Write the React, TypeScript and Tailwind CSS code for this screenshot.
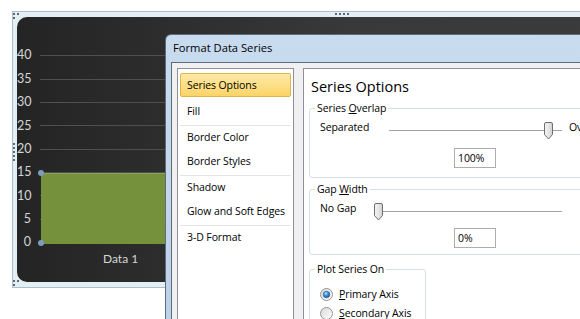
import React from "react";

const ticks = [40, 35, 30, 25, 20, 15, 10, 5, 0];

type NavEntry = { label: string; sep?: boolean };
const navItems: NavEntry[] = [
  { label: "Fill", sep: true },
  { label: "Border Color" },
  { label: "Border Styles", sep: true },
  { label: "Shadow" },
  { label: "Glow and Soft Edges", sep: true },
  { label: "3-D Format" },
];

function Thumb() {
  return (
    <svg width="11" height="18" viewBox="0 0 11 18">
      <defs>
        <linearGradient id="thumbFill" x1="0" y1="0" x2="1" y2="0">
          <stop offset="0" stopColor="#f4f4f4" />
          <stop offset="0.5" stopColor="#e6e6e6" />
          <stop offset="1" stopColor="#cfcfcf" />
        </linearGradient>
      </defs>
      <path
        d="M1.5 2 Q1.5 0.5 3 0.5 H8 Q9.5 0.5 9.5 2 V12.5 L5.5 17 L1.5 12.5 Z"
        fill="url(#thumbFill)"
        stroke="#6f6f6f"
        strokeWidth="1"
      />
    </svg>
  );
}

function Radio({ checked }: { checked?: boolean }) {
  return (
    <svg width="13" height="13" viewBox="0 0 13 13">
      <defs>
        <linearGradient id="radioBg" x1="0" y1="0" x2="1" y2="1">
          <stop offset="0" stopColor="#d9d9d9" />
          <stop offset="1" stopColor="#ffffff" />
        </linearGradient>
        <radialGradient id="radioDot" cx="0.4" cy="0.35" r="0.7">
          <stop offset="0" stopColor="#b6e2ff" />
          <stop offset="0.5" stopColor="#3d8ad6" />
          <stop offset="1" stopColor="#1a4f8c" />
        </radialGradient>
      </defs>
      <circle cx="6.5" cy="6.5" r="6" fill="url(#radioBg)" stroke="#929292" />
      {checked && <circle cx="6.5" cy="6.5" r="3.3" fill="url(#radioDot)" stroke="#2a5a8c" strokeWidth="0.6" />}
    </svg>
  );
}

function Slider({ width, thumbAt }: { width: number; thumbAt: number }) {
  return (
    <div className="relative h-[20px] shrink-0" style={{ width }}>
      <div className="absolute left-0 right-0 top-[12px] h-[2px] border-t border-[#a2a2a2] bg-white" />
      <div className="absolute top-[4px]" style={{ left: thumbAt }}>
        <Thumb />
      </div>
    </div>
  );
}

export default function App() {
  return (
    <div className="w-[580px] h-[319px] relative overflow-hidden bg-white font-['Open_Sans',sans-serif]">
      {/* CHART */}
      <div className="pt-[11px] pl-[12px]">
        <div className="relative w-[620px] h-[277px] border border-[#a9bfcb] bg-[#e4eff4] pt-[5px] pl-[4px] pb-[5px]">
          {/* handles */}
          <div className="absolute left-[322px] top-[1px] flex gap-[2px]">
            {[0, 1, 2, 3].map((i) => (
              <div key={i} className="w-[2px] h-[2px] bg-[#5b6a78]" />
            ))}
          </div>
          <div className="absolute left-[0px] top-[131px] flex flex-col gap-[2px]">
            {[0, 1, 2, 3, 4].map((i) => (
              <div key={i} className="w-[2px] h-[2px] bg-[#5b6a78]" />
            ))}
          </div>
          <div className="absolute left-[0px] top-[1px] grid grid-cols-2 gap-[2px]">
            <div className="w-[2px] h-[2px] bg-[#5b6a78]" />
            <div className="w-[2px] h-[2px] bg-[#5b6a78]" />
            <div className="w-[2px] h-[2px] bg-[#5b6a78]" />
          </div>
          <div className="absolute left-[0px] bottom-[1px] grid grid-cols-2 gap-[2px]">
            <div className="w-[2px] h-[2px] bg-[#5b6a78]" />
            <div className="w-[2px] h-[2px] bg-[#5b6a78]" />
            <div className="w-[2px] h-[2px] bg-[#5b6a78]" />
          </div>

          {/* dark plot */}
          <div className="h-full rounded-l-[10px] bg-linear-to-r from-[#242424] via-[#393939] via-55% to-[#3b3b3b] pt-[27px] font-['Lato',sans-serif]">
            <div className="relative">
              {ticks.map((t) => (
                <div key={t} className="flex items-center h-[23.375px]">
                  <div className="w-[14px] text-right text-[12.5px] leading-none text-[#d6d6d6]">{t}</div>
                  <div className="ml-[9px] flex-1 h-px bg-[#4f4f4f]" />
                </div>
              ))}
              {/* series bar */}
              <div className="absolute left-[24px] top-[129px] w-[200px] h-[71px] bg-[#76913b] border-t border-[#8aa552]" />
              <div className="absolute left-[21px] top-[126px] w-[6px] h-[6px] rounded-full bg-[#7d9cbd]" />
              <div className="absolute left-[21px] top-[196px] w-[6px] h-[6px] rounded-full bg-[#7d9cbd]" />
            </div>
            <div className="-mt-[3px] pl-[86px] text-[12px] leading-[16px] text-[#d6d6d6]">Data 1</div>
          </div>
        </div>
      </div>

      {/* DIALOG */}
      <div className="absolute left-[165px] top-[34px] w-[440px] h-[300px] flex flex-col border border-[#5f6b78] rounded-t-[6px] bg-linear-to-b from-[#c8dbef] to-[#bcd2ea] pl-[5px] text-[10.5px] tracking-[-0.1px] text-black">
        <div className="h-[27px] flex items-center pl-[2px] text-[11.2px] tracking-normal">Format Data Series</div>
        <div className="flex-1 flex gap-[9px] border-t border-l border-[#5d6a78] bg-[#f0f0f0] pt-[5px] pl-[5px]">
          {/* NAV */}
          <div className="w-[117px] shrink-0 border border-[#8d9197] bg-white pt-[4px] px-[2px] whitespace-nowrap">
            <div className="h-[24px] flex items-center pl-[6px] pt-px rounded-[2px] border border-[#e1b450] bg-linear-to-b from-[#fdeaa7] to-[#fbd466]">
              Series Options
            </div>
            <div className="mt-[3px]">
              {navItems.map((n) => (
                <div key={n.label} className={n.sep ? "border-b border-[#e4e4e4]" : ""}>
                  <div className="h-[24.5px] flex items-center pl-[7px]">{n.label}</div>
                </div>
              ))}
            </div>
          </div>

          {/* RIGHT PANEL */}
          <div className="flex-1 border border-[#8d9197] bg-white pl-[5px] pt-[7px] whitespace-nowrap">
            <div className="pl-[2px] text-[14.5px] tracking-normal leading-[22px]">Series Options</div>

            <fieldset className="mt-[2px] w-[300px] border border-[#d5dfe5] rounded-[3px] pb-[9px]">
              <legend className="ml-[5px] px-[2px] leading-[16px]">
                Series <span className="underline">O</span>verlap
              </legend>
              <div className="mt-[2px] h-[20px] flex items-center pl-[10px]">
                <div className="w-[69px] shrink-0">Separated</div>
                <Slider width={173} thumbAt={154} />
                <div className="ml-[7px]">Overlapped</div>
              </div>
              <div className="mt-[10px] ml-[144px] w-[42px] h-[20px] border border-[#abadb3] bg-white pl-[3px] leading-[18px]">
                100%
              </div>
            </fieldset>

            <fieldset className="mt-[3px] w-[300px] border border-[#d5dfe5] rounded-[3px] pb-[6px]">
              <legend className="ml-[5px] px-[2px] leading-[16px]">
                Gap <span className="underline">W</span>idth
              </legend>
              <div className="mt-[2px] h-[20px] flex items-center pl-[10px]">
                <div className="w-[54px] shrink-0">No Gap</div>
                <Slider width={188} thumbAt={-1} />
              </div>
              <div className="mt-[9px] ml-[144px] w-[42px] h-[20px] border border-[#abadb3] bg-white pl-[3px] leading-[18px]">
                0%
              </div>
            </fieldset>

            <fieldset className="mt-[6px] w-[117px] border border-[#d5dfe5] rounded-[3px] pb-[6px]">
              <legend className="ml-[5px] px-[2px] leading-[16px]">Plot Series On</legend>
              <div className="mt-[8px] h-[19px] flex items-center gap-[6px] pl-[10px]">
                <Radio checked />
                <span>
                  <span className="underline">P</span>rimary Axis
                </span>
              </div>
              <div className="h-[19px] flex items-center gap-[6px] pl-[10px]">
                <Radio />
                <span>
                  <span className="underline">S</span>econdary Axis
                </span>
              </div>
            </fieldset>
          </div>
        </div>
      </div>
    </div>
  );
}
